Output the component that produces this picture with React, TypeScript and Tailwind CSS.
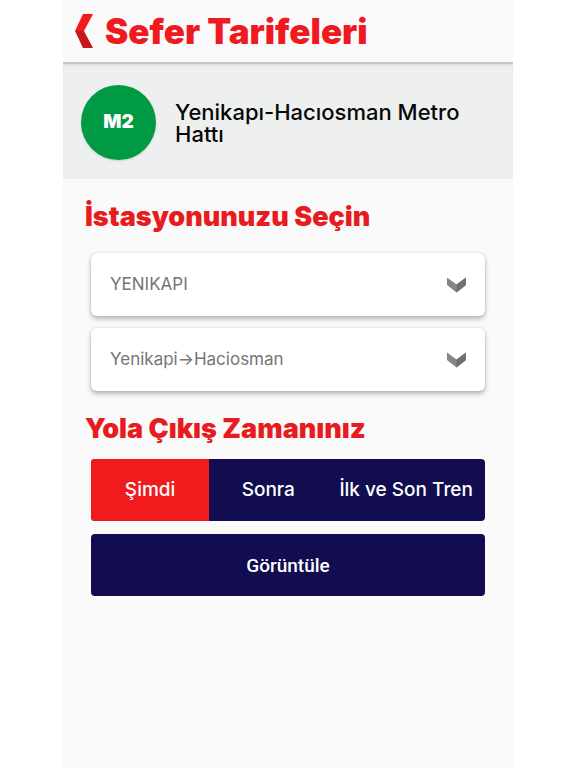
import React, { useState } from 'react';

interface SelectCardProps {
  label: string;
  options: string[];
}

const departureTimes = ['Şimdi', 'Sonra', 'İlk ve Son Tren'];

/** White raised drop-down with a two-tone chevron on the right. */
const SelectCard: React.FC<SelectCardProps> = ({ label, options }) => {
  const [value, setValue] = useState(options[0]);

  return (
    <div className="relative">
      <select
        aria-label={label}
        value={value}
        onChange={(e) => setValue(e.target.value)}
        className="block h-[63px] w-full appearance-none rounded-md bg-white pt-px pr-14 pl-[19px] text-[17px] text-[#757575] shadow-[0_3px_5px_rgba(0,0,0,0.26),0_0_3px_rgba(0,0,0,0.14)]"
      >
        {options.map((option) => (
          <option key={option}>{option}</option>
        ))}
      </select>
      <svg className="pointer-events-none absolute top-6 right-[18px]" width="21" height="16" viewBox="0 0 21 16" aria-hidden="true">
        <path d="M1 0.5 L10.5 7.5 L20 0.5 V8 L10.5 15.5 L1 8 Z" fill="#858585" />
        <path d="M20 0.5 L10.5 7.5 V15.5 L20 8 Z" fill="#707070" />
      </svg>
    </div>
  );
};

export default function App() {
  const [departure, setDeparture] = useState(departureTimes[0]);

  return (
    <div className="min-h-screen bg-white px-[63px] font-['Inter',sans-serif]">
      <div className="min-h-screen bg-[#fafafa]">
        <header className="flex h-16 items-center gap-3 border-b-2 border-[#c4c5c5] pl-3">
          <button type="button" aria-label="Geri">
            <svg width="18" height="34" viewBox="0 0 18 34" aria-hidden="true">
              <path d="M8 0 H18 L9 17 H0 Z" fill="#f11a1d" />
              <path d="M0 17 H9 L18 34 H8 Z" fill="#c4181e" />
            </svg>
          </button>
          <h1 className="text-[35px] leading-[40px] font-black whitespace-nowrap text-[#ee1a1f]">Sefer Tarifeleri</h1>
        </header>

        <section className="flex h-[115px] items-center gap-[19px] bg-[#eef0ef] pt-0.5 pr-8 pl-[18px] shadow-[inset_0_2px_2px_rgba(0,0,0,0.06)]">
          <div className="flex size-[75px] shrink-0 items-center justify-center rounded-full bg-[#009a44] text-[19px] font-black text-white shadow-[0_1px_2px_rgba(0,0,0,0.15)]">
            M2
          </div>
          <p className="text-[22px] leading-[22px] font-medium text-[#080808]">Yenikapı-Hacıosman Metro Hattı</p>
        </section>

        <main className="px-7">
          <h2 className="-ml-1.5 pt-[21px] text-[27px] leading-[34px] font-black whitespace-nowrap text-[#e81c20]">İstasyonunuzu Seçin</h2>
          <div className="mt-[19px] flex flex-col gap-3">
            <SelectCard label="İstasyon" options={['YENIKAPI']} />
            <SelectCard label="Yön" options={['Yenikapi→Haciosman']} />
          </div>

          <h2 className="-ml-1.5 pt-[21px] text-[27px] leading-[34px] font-black whitespace-nowrap text-[#e81c20]">Yola Çıkış Zamanınız</h2>
          <div className="mt-[13px] flex h-[62px] overflow-hidden rounded bg-[#110d50]" role="group" aria-label="Yola Çıkış Zamanınız">
            {departureTimes.map((time, i) => (
              <button
                key={time}
                type="button"
                aria-pressed={departure === time}
                onClick={() => setDeparture(time)}
                className={`pt-px text-[19px] font-medium whitespace-nowrap text-white ${i === 2 ? 'w-2/5' : 'w-3/10'} ${departure === time ? 'bg-[#f11a1d]' : ''}`}
              >
                {time}
              </button>
            ))}
          </div>
          <button type="button" className="mt-[13px] h-[62px] w-full rounded bg-[#110d50] pt-0.5 font-['Roboto',sans-serif] text-[19px] font-medium text-white">
            Görüntüle
          </button>
        </main>
      </div>
    </div>
  );
}
